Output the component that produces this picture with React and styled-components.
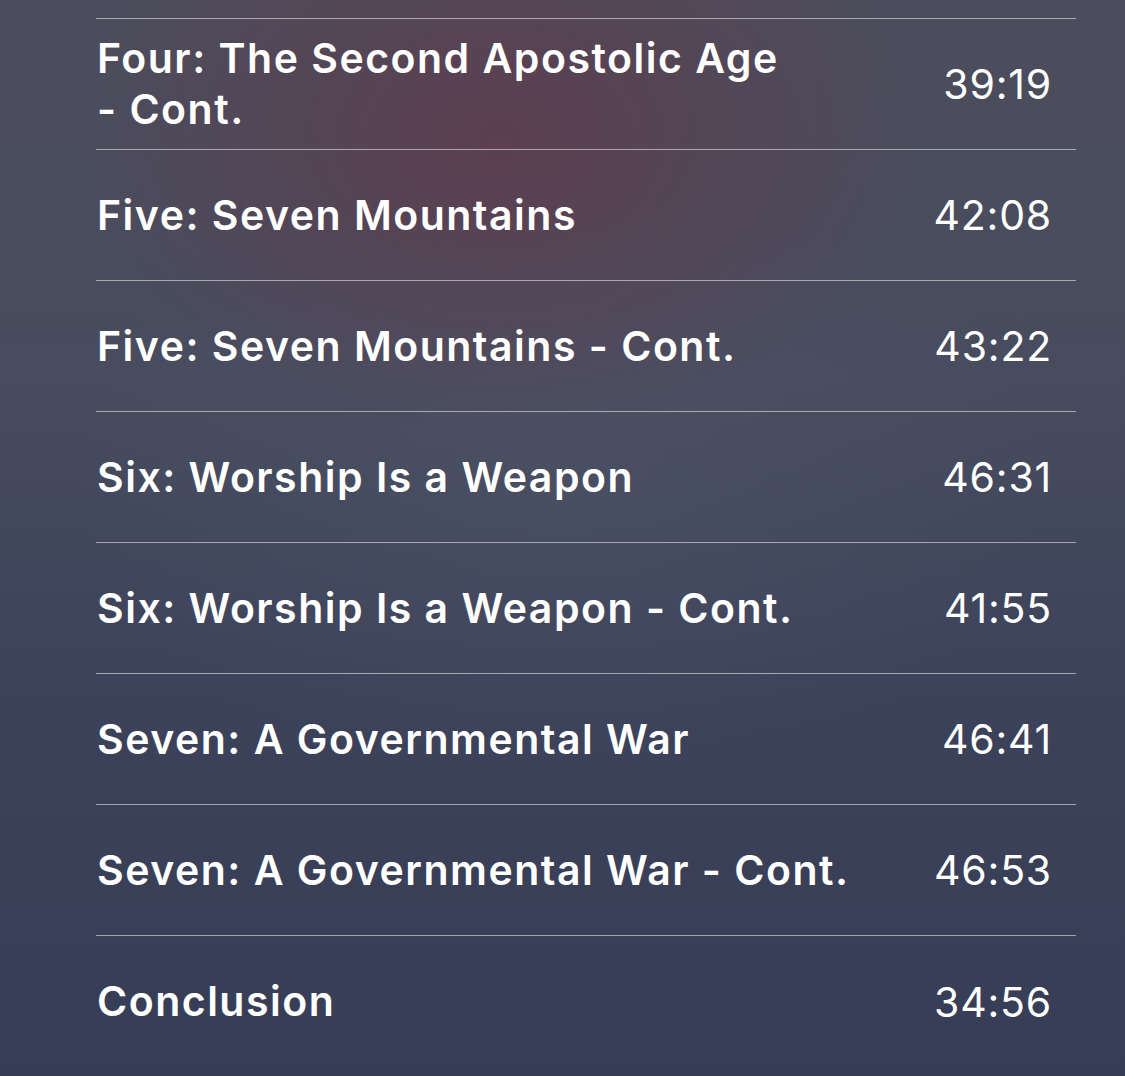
import React from "react";
import styled, { createGlobalStyle } from "styled-components";

const Global = createGlobalStyle`
  html, body {
    margin: 0;
    padding: 0;
  }
  body {
    width: 1125px;
    height: 1076px;
    overflow: hidden;
    font-family: Inter, "Noto Sans", "Liberation Sans", sans-serif;
    color: #fff;
    background:
      radial-gradient(ellipse 420px 300px at 500px 140px, rgba(98, 58, 76, 0.75), rgba(98, 58, 76, 0) 100%),
      radial-gradient(ellipse 500px 300px at 560px 480px, rgba(84, 90, 108, 0.35), rgba(84, 90, 108, 0) 100%),
      linear-gradient(180deg, #4c4d5c 0%, #474c5e 35%, #3c4259 65%, #363d56 100%);
  }
`;

const Screen = styled.main`
  box-sizing: border-box;
  width: 1125px;
  height: 1076px;
  padding: 18px 49px 0 96px;
`;

const List = styled.ul`
  list-style: none;
  margin: 0;
  padding: 0;
  border-top: 1px solid rgba(200, 200, 206, 0.75);
`;

const Row = styled.li`
  box-sizing: border-box;
  height: 131px;
  display: flex;
  align-items: center;
  justify-content: space-between;
  gap: 30px;
  padding: 0 24px 0 1px;
  border-bottom: 1px solid rgba(200, 200, 206, 0.75);
  &:last-child {
    border-bottom: none;
  }
`;

const Title = styled.span`
  max-width: 790px;
  font-size: 41px;
  line-height: 51px;
  font-weight: 600;
  letter-spacing: 1.5px;
`;

const Suffix = styled.span`
  white-space: nowrap;
`;

const Duration = styled.span`
  font-size: 41px;
  font-weight: 400;
  letter-spacing: 0.8px;
`;

const tracks = [
  { name: "Four: The Second Apostolic Age", cont: true, time: "39:19" },
  { name: "Five: Seven Mountains", cont: false, time: "42:08" },
  { name: "Five: Seven Mountains", cont: true, time: "43:22" },
  { name: "Six: Worship Is a Weapon", cont: false, time: "46:31" },
  { name: "Six: Worship Is a Weapon", cont: true, time: "41:55" },
  { name: "Seven: A Governmental War", cont: false, time: "46:41" },
  { name: "Seven: A Governmental War", cont: true, time: "46:53" },
  { name: "Conclusion", cont: false, time: "34:56" },
];

export default function App() {
  return (
    <>
      <Global />
      <Screen>
        <List>
          {tracks.map((t) => (
            <Row key={t.time}>
              <Title>
                {t.name}
                {t.cont && (
                  <>
                    {" "}
                    <Suffix>- Cont.</Suffix>
                  </>
                )}
              </Title>
              <Duration>{t.time}</Duration>
            </Row>
          ))}
        </List>
      </Screen>
    </>
  );
}
